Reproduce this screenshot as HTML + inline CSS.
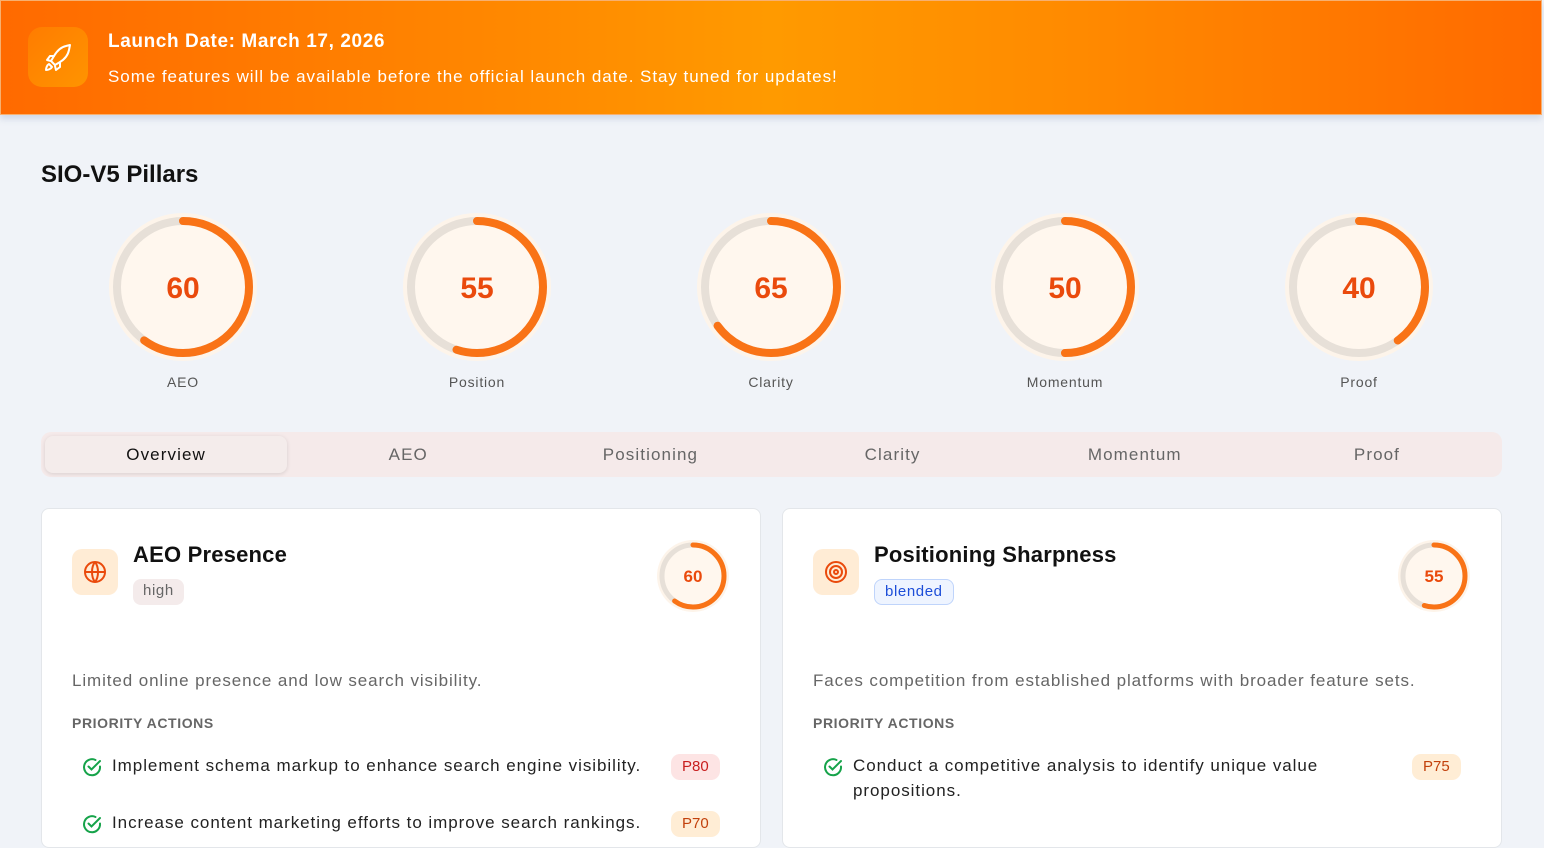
<!DOCTYPE html>
<html><head><meta charset="utf-8"><style>
*{box-sizing:border-box;margin:0;padding:0}
body{width:1544px;height:835px;overflow:hidden;background:#f0f3f8;font-family:"Liberation Sans",sans-serif;position:relative;color:#111}
.banner{position:absolute;left:0;top:0;width:1542px;height:115px;background:linear-gradient(90deg,#ff6a00 0%,#ff8a00 35%,#ff9a00 50%,#ff8a00 70%,#ff6a00 100%);border:1px solid #f7b070;box-shadow:0 4px 6px rgba(120,140,180,.25)}
.ic{position:absolute;left:27px;top:26px;width:60px;height:60px;border-radius:14px;background:linear-gradient(135deg,#ff7c00,#ff9400)}
.bt{position:absolute;left:107px;top:30px;color:#fff;font-weight:bold;font-size:19px;letter-spacing:.6px}
.bs{position:absolute;left:107px;top:66px;color:#fff;font-size:17px;letter-spacing:.95px}
h2{position:absolute;left:41px;top:161px;font-size:24px;font-weight:bold;color:#111}
.g{position:absolute;top:213px;width:150px;text-align:center}
.g .l{font-size:14px;color:#555;margin-top:6px;letter-spacing:.8px}
.tabs{position:absolute;left:41px;top:432px;width:1461px;height:45px;background:#f5eaea;border-radius:10px;display:flex;padding:4px}
.tabs div{flex:1;text-align:center;line-height:37px;font-size:17px;color:#666;letter-spacing:1.1px}
.tabs .a{background:#f4eceb;color:#111;border-radius:8px;box-shadow:0 1px 4px rgba(0,0,0,.12)}
.card{position:absolute;top:508px;width:720px;height:340px;background:#fff;border:1px solid #e3e6ea;border-radius:8px}
.ci{position:absolute;left:30px;top:40px;width:46px;height:46px;border-radius:10px;background:#ffecd5}
.ct{position:absolute;left:91px;top:33px;font-size:22px;font-weight:bold;letter-spacing:.2px}
.tag{position:absolute;left:91px;top:70px;height:26px;line-height:24px;padding:0 10px;border-radius:8px;font-size:15px;letter-spacing:.6px}
.desc{position:absolute;left:30px;top:162px;font-size:17px;color:#666;letter-spacing:.9px}
.pa{position:absolute;left:30px;top:206px;font-size:14px;font-weight:bold;color:#666;letter-spacing:.6px}
.act{position:absolute;left:40px;font-size:17px;color:#222;line-height:25px;letter-spacing:.95px}
.act svg{position:absolute;left:0;top:4px}
.act span{position:absolute;left:30px;white-space:nowrap}
.p{position:absolute;height:26px;line-height:26px;padding:0 11px;border-radius:9px;font-size:15px}
.mg{position:absolute;top:30px}
</style></head><body>
<div class="banner">
<div class="ic"><svg width="60" height="60" viewBox="0 0 60 60" fill="none" stroke="#fff" stroke-width="2" stroke-linejoin="round" stroke-linecap="round"><path d="M38 19c-5 1-9 5-12 10l-3 5 4 4 5-3c5-3 8-7 9-12l1-5z"/><path d="M26 29h-4l-3 4 4 1M32 36v4l-4 3-1-4"/><path d="M21 37c-2 1-3 4-3 6 2 0 5-1 6-3z"/></svg></div>
<div class="bt">Launch Date: March 17, 2026</div>
<div class="bs">Some features will be available before the official launch date. Stay tuned for updates!</div>
</div>
<h2>SIO-V5 Pillars</h2>

<div class="g" style="left:108px"><svg width="150" height="150" viewBox="0 0 150 150"><circle cx="75" cy="74" r="74" fill="#fdf4ea"/><circle cx="75" cy="74" r="66" fill="#fff7ee" stroke="#e7e0d8" stroke-width="8"/><circle cx="75" cy="74" r="66" fill="none" stroke="#f97316" stroke-width="8" stroke-linecap="round" stroke-dasharray="248.8 414.7" transform="rotate(-90 75 74)"/><text x="75" y="85" text-anchor="middle" font-size="30" font-weight="bold" fill="#ea4a0c" font-family="Liberation Sans">60</text></svg><div class="l">AEO</div></div>
<div class="g" style="left:402px"><svg width="150" height="150" viewBox="0 0 150 150"><circle cx="75" cy="74" r="74" fill="#fdf4ea"/><circle cx="75" cy="74" r="66" fill="#fff7ee" stroke="#e7e0d8" stroke-width="8"/><circle cx="75" cy="74" r="66" fill="none" stroke="#f97316" stroke-width="8" stroke-linecap="round" stroke-dasharray="228.1 414.7" transform="rotate(-90 75 74)"/><text x="75" y="85" text-anchor="middle" font-size="30" font-weight="bold" fill="#ea4a0c" font-family="Liberation Sans">55</text></svg><div class="l">Position</div></div>
<div class="g" style="left:696px"><svg width="150" height="150" viewBox="0 0 150 150"><circle cx="75" cy="74" r="74" fill="#fdf4ea"/><circle cx="75" cy="74" r="66" fill="#fff7ee" stroke="#e7e0d8" stroke-width="8"/><circle cx="75" cy="74" r="66" fill="none" stroke="#f97316" stroke-width="8" stroke-linecap="round" stroke-dasharray="269.5 414.7" transform="rotate(-90 75 74)"/><text x="75" y="85" text-anchor="middle" font-size="30" font-weight="bold" fill="#ea4a0c" font-family="Liberation Sans">65</text></svg><div class="l">Clarity</div></div>
<div class="g" style="left:990px"><svg width="150" height="150" viewBox="0 0 150 150"><circle cx="75" cy="74" r="74" fill="#fdf4ea"/><circle cx="75" cy="74" r="66" fill="#fff7ee" stroke="#e7e0d8" stroke-width="8"/><circle cx="75" cy="74" r="66" fill="none" stroke="#f97316" stroke-width="8" stroke-linecap="round" stroke-dasharray="207.3 414.7" transform="rotate(-90 75 74)"/><text x="75" y="85" text-anchor="middle" font-size="30" font-weight="bold" fill="#ea4a0c" font-family="Liberation Sans">50</text></svg><div class="l">Momentum</div></div>
<div class="g" style="left:1284px"><svg width="150" height="150" viewBox="0 0 150 150"><circle cx="75" cy="74" r="74" fill="#fdf4ea"/><circle cx="75" cy="74" r="66" fill="#fff7ee" stroke="#e7e0d8" stroke-width="8"/><circle cx="75" cy="74" r="66" fill="none" stroke="#f97316" stroke-width="8" stroke-linecap="round" stroke-dasharray="165.9 414.7" transform="rotate(-90 75 74)"/><text x="75" y="85" text-anchor="middle" font-size="30" font-weight="bold" fill="#ea4a0c" font-family="Liberation Sans">40</text></svg><div class="l">Proof</div></div>

<div class="tabs"><div class="a">Overview</div><div>AEO</div><div>Positioning</div><div>Clarity</div><div>Momentum</div><div>Proof</div></div>

<div class="card" style="left:41px">
<div class="ci"><svg width="46" height="46" viewBox="0 0 46 46" fill="none" stroke="#ea4a0c" stroke-width="2"><circle cx="23" cy="23" r="10"/><path d="M13 23h20M23 13c-4 5-4 15 0 20M23 13c4 5 4 15 0 20"/></svg></div>
<div class="ct">AEO Presence</div>
<div class="tag" style="background:#f4ebeb;color:#666">high</div>
<svg class="mg" style="left:614px" width="74" height="74" viewBox="0 0 74 74"><circle cx="37" cy="37" r="36" fill="#fdf4ea"/><circle cx="37" cy="37" r="31" fill="#fff7ee" stroke="#e7e0d8" stroke-width="5"/><circle cx="37" cy="37" r="31" fill="none" stroke="#f97316" stroke-width="5" stroke-linecap="round" stroke-dasharray="116.9 194.8" transform="rotate(-90 37 37)"/><text x="37" y="43" text-anchor="middle" font-size="17" font-weight="bold" fill="#ea4a0c" font-family="Liberation Sans">60</text></svg>
<div class="desc">Limited online presence and low search visibility.</div>
<div class="pa">PRIORITY ACTIONS</div>
<div class="act" style="top:244px"><svg width="20" height="20" viewBox="0 0 20 20" fill="none" stroke="#16a34a" stroke-width="2" stroke-linecap="round"><path d="M18 9.5A8 8 0 1 1 13.5 3"/><path d="M6.5 9.5l3 3L18 4"/></svg><span>Implement schema markup to enhance search engine visibility.</span></div>
<div class="p" style="left:629px;top:245px;background:#fde4e4;color:#c81e1e">P80</div>
<div class="act" style="top:301px"><svg width="20" height="20" viewBox="0 0 20 20" fill="none" stroke="#16a34a" stroke-width="2" stroke-linecap="round"><path d="M18 9.5A8 8 0 1 1 13.5 3"/><path d="M6.5 9.5l3 3L18 4"/></svg><span>Increase content marketing efforts to improve search rankings.</span></div>
<div class="p" style="left:629px;top:302px;background:#ffedd5;color:#c2410c">P70</div>
</div>

<div class="card" style="left:782px">
<div class="ci"><svg width="46" height="46" viewBox="0 0 46 46" fill="none" stroke="#ea4a0c" stroke-width="2"><circle cx="23" cy="23" r="10"/><circle cx="23" cy="23" r="6"/><circle cx="23" cy="23" r="2"/></svg></div>
<div class="ct">Positioning Sharpness</div>
<div class="tag" style="background:#eef4ff;color:#1d4ed8;border:1px solid #bfd4fb">blended</div>
<svg class="mg" style="left:614px" width="74" height="74" viewBox="0 0 74 74"><circle cx="37" cy="37" r="36" fill="#fdf4ea"/><circle cx="37" cy="37" r="31" fill="#fff7ee" stroke="#e7e0d8" stroke-width="5"/><circle cx="37" cy="37" r="31" fill="none" stroke="#f97316" stroke-width="5" stroke-linecap="round" stroke-dasharray="107.1 194.8" transform="rotate(-90 37 37)"/><text x="37" y="43" text-anchor="middle" font-size="17" font-weight="bold" fill="#ea4a0c" font-family="Liberation Sans">55</text></svg>
<div class="desc">Faces competition from established platforms with broader feature sets.</div>
<div class="pa">PRIORITY ACTIONS</div>
<div class="act" style="top:244px"><svg width="20" height="20" viewBox="0 0 20 20" fill="none" stroke="#16a34a" stroke-width="2" stroke-linecap="round"><path d="M18 9.5A8 8 0 1 1 13.5 3"/><path d="M6.5 9.5l3 3L18 4"/></svg><span>Conduct a competitive analysis to identify unique value</span><span style="top:25px">propositions.</span></div>
<div class="p" style="left:629px;top:245px;background:#ffedd5;color:#c2410c">P75</div>
</div>
</body></html>
